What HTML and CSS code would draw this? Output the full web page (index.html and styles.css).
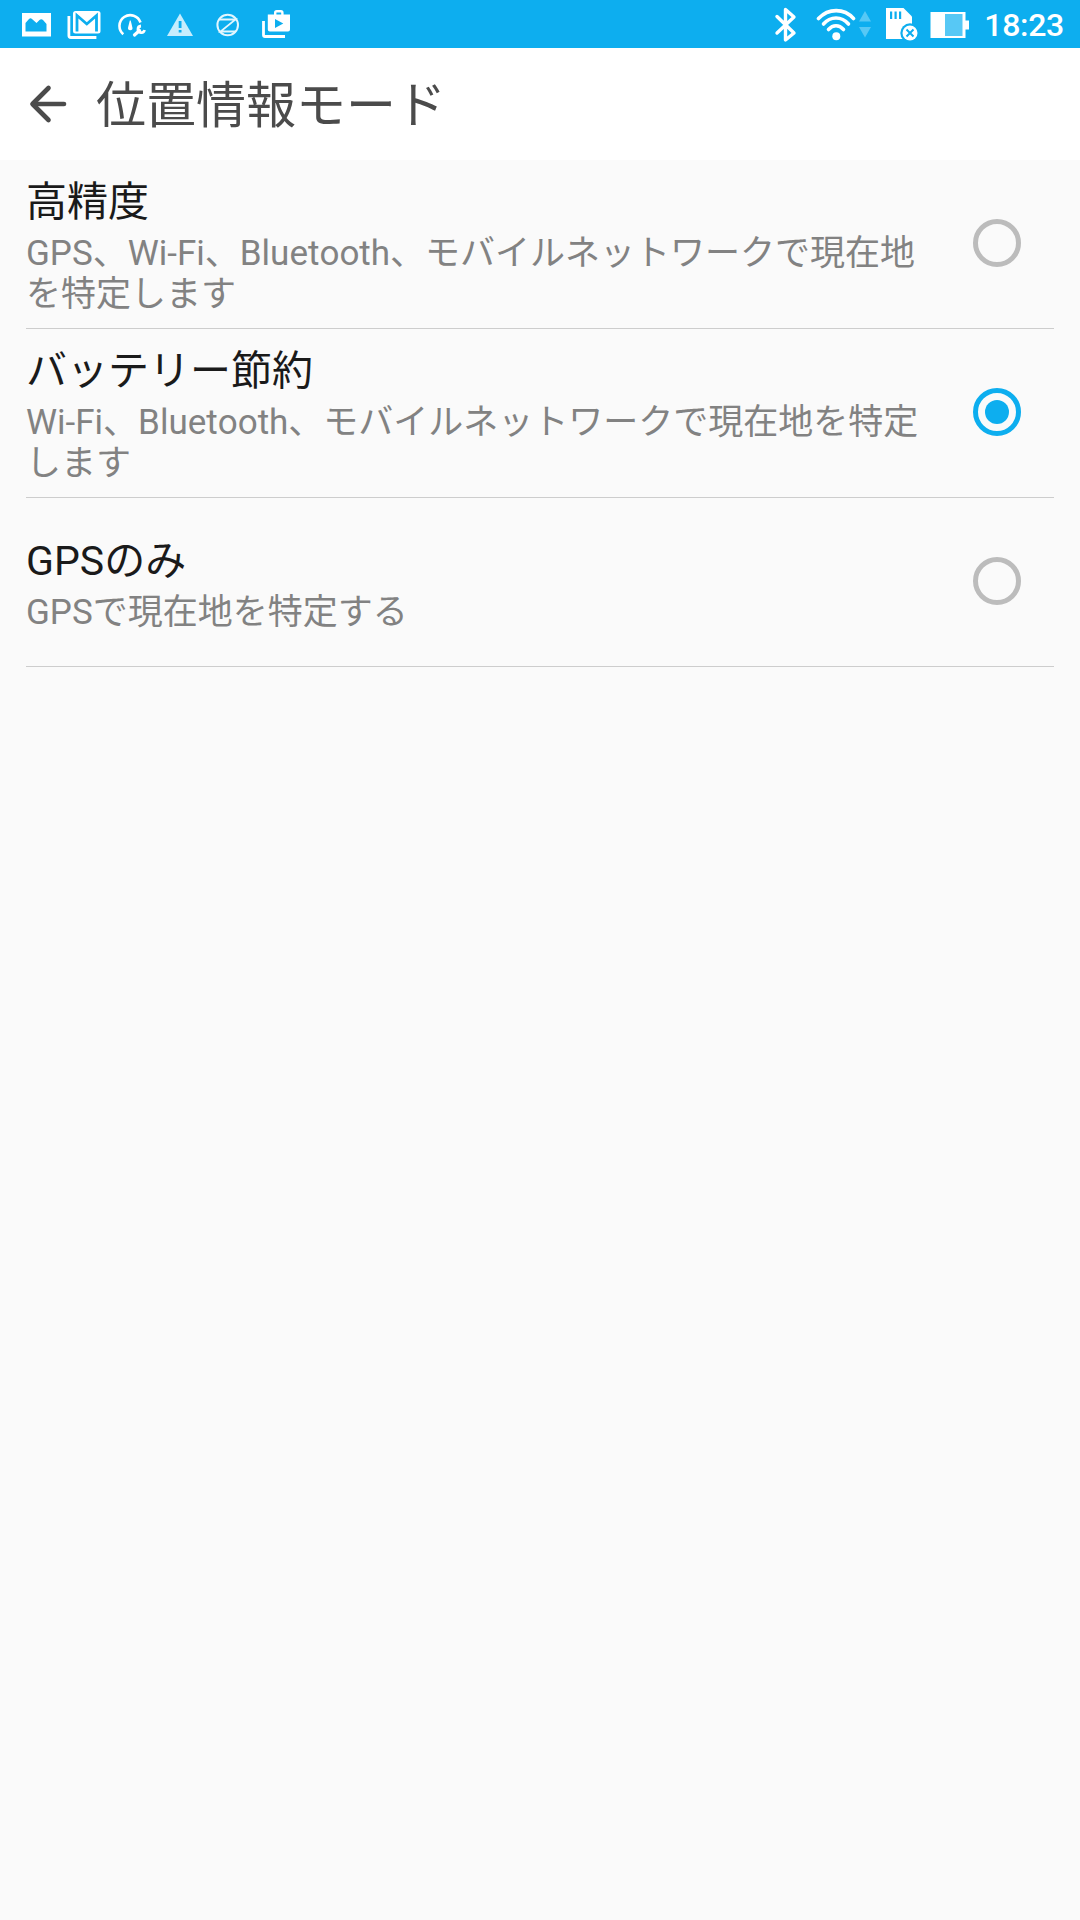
FILE: index.html
```html
<!DOCTYPE html>
<html lang="ja">
<head>
    <meta charset="UTF-8">
    <meta name="viewport" content="width=device-width, initial-scale=1.0">
    <title>位置情報モード</title>
    <link rel="stylesheet" href="styles.css">
</head>
<body>
    <div class="status-bar">
        <div class="notifications">
            <!-- picture -->
            <svg width="30" height="48" viewBox="0 0 30 48">
                <path fill="#fff" fill-rule="evenodd" d="M1 13h29v23.500H1zM4.500 31.500h21v-7.500l-3.500-4c-1-1-2.500-1-3.500 0l-3 3-4.500-4c-1-1-2-1-3 0L4.500 23z"/>
            </svg>
            <!-- mail -->
            <svg width="36" height="48" viewBox="0 0 36 48">
                <path fill="none" stroke="#fff" stroke-width="2.800" d="M2.900 16v19.500a2 2 0 0 0 2 2h25.500"/>
                <rect fill="#fff" x="7" y="11" width="27.500" height="22.500" rx="2.500"/>
                <path fill="none" stroke="#0daeef" stroke-width="2.800" d="M11 31.500V15.500L20.800 24l9.700-8.500v16"/>
            </svg>
            <!-- gauge -->
            <svg width="28" height="48" viewBox="0 0 28 48">
                <path fill="none" stroke="#fff" stroke-width="2.600" d="M5.300 34.200A10.800 10.800 0 1 1 22.500 22.500"/>
                <path fill="#fff" d="M11.800 20.500h.9l1.700 7a2.200 2.200 0 1 1-4.300 0z"/>
                <path fill="none" stroke="#fff" stroke-width="3.200" stroke-linecap="round" d="M16.500 35l5-4.500"/>
                <path fill="none" stroke="#fff" stroke-width="2.800" d="M23 26a3.300 3.300 0 1 0 3.500 4"/>
            </svg>
            <!-- warning -->
            <svg width="26" height="48" viewBox="0 0 26 48">
                <path fill="#c6edfd" d="M13 13.500L26 36H0z"/>
                <path fill="#0daeef" d="M11.700 21h2.800v7h-2.800zM11.700 30h2.800v2.600h-2.800z"/>
            </svg>
            <!-- circled z -->
            <svg width="24" height="48" viewBox="0 0 24 48">
                <circle cx="11.700" cy="25" r="10.300" fill="none" stroke="#e2f6fe" stroke-width="2"/>
                <path fill="none" stroke="#e2f6fe" stroke-width="1.800" d="M4 19.500h15.500L4.500 31.500h15"/>
            </svg>
            <!-- play store -->
            <svg width="30" height="48" viewBox="0 0 30 48">
                <path fill="none" stroke="#fff" stroke-width="2.800" d="M2.500 21v14a1.500 1.500 0 0 0 1.500 1.500h20"/>
                <path fill="none" stroke="#fff" stroke-width="2.400" d="M14.200 16v-3.300a1.500 1.500 0 0 1 1.500-1.500h4.200a1.500 1.500 0 0 1 1.500 1.500V16"/>
                <path fill="#fff" fill-rule="evenodd" d="M6.800 14.500H29V29.500a2 2 0 0 1-2 2H8.800a2 2 0 0 1-2-2zM14 19v9l8.300-4.500z"/>
            </svg>
        </div>
        <div class="system">
            <!-- bluetooth -->
            <svg class="bluetooth" width="24" height="48" viewBox="0 0 24 48">
                <path fill="none" stroke="#fff" stroke-width="3.400" stroke-linejoin="round" stroke-linecap="round" d="M3 16.500L20 33l-8.500 7V9.500L20 17 3 33"/>
            </svg>
            <!-- wifi -->
            <svg class="wifi" width="40" height="48" viewBox="0 0 40 48">
                <g fill="none" stroke="#fff" stroke-width="3.600" stroke-linecap="round">
                    <path d="M2.500 18.500c10-10.500 25.500-10.500 35 0"/>
                    <path d="M7.500 24c7-8 18-8 25 0"/>
                    <path d="M12.500 29.500c4.500-5 10.500-5 15 0"/>
                </g>
                <circle cx="20.300" cy="36.300" r="4" fill="#fff"/>
            </svg>
            <svg class="traffic" width="12" height="48" viewBox="0 0 12 48">
                <path fill="#57c8f5" d="M6 11l6 10.500H0zM6 37.500L0 27h12z"/>
            </svg>
            <!-- sd card -->
            <svg class="sd-card" width="34" height="48" viewBox="0 0 34 48">
                <path fill="#fff" d="M1 8h17.500l8.500 8.500V39H1z"/>
                <path fill="#0daeef" d="M5 11.500h2.200V19H5zM9.500 11.500h2.200V19H9.500zM14 11.500h2.200V19H14z"/>
                <circle cx="25" cy="33" r="9.700" fill="#0daeef"/>
                <circle cx="25" cy="33" r="7.500" fill="#fff"/>
                <path stroke="#0daeef" stroke-width="2" d="M21.500 29.500l7 7M28.500 29.500l-7 7"/>
            </svg>
            <!-- battery -->
            <svg class="battery" width="40" height="48" viewBox="0 0 40 48">
                <path fill="#fff" d="M.5 12h35v8.500H39v9h-3.500V38H.5z"/>
                <path fill="#57c8f5" d="M15 14h17.500v22H15z"/>
            </svg>
            <span class="time">18:23</span>
        </div>
    </div>

    <div class="header">
        <svg width="40" height="40" viewBox="0 0 40 40">
            <path fill="none" stroke="#4b4b4b" stroke-width="4.600" stroke-linecap="round" stroke-linejoin="round" d="M20.500 4L4.500 20l16 16"/>
            <path stroke="#4b4b4b" stroke-width="4.600" stroke-linecap="round" d="M5 20h31"/>
        </svg>
        <h1>位置情報モード</h1>
    </div>

    <div class="options">
        <div class="option">
            <div class="option-text">
                <div class="option-title">高精度</div>
                <div class="option-summary">GPS、Wi-Fi、Bluetooth、モバイルネットワークで現在地<br>を特定します</div>
            </div>
            <div class="radio"></div>
        </div>
        <div class="option">
            <div class="option-text">
                <div class="option-title">バッテリー節約</div>
                <div class="option-summary">Wi-Fi、Bluetooth、モバイルネットワークで現在地を特定<br>します</div>
            </div>
            <div class="radio checked"></div>
        </div>
        <div class="option">
            <div class="option-text">
                <div class="option-title">GPSのみ</div>
                <div class="option-summary">GPSで現在地を特定する</div>
            </div>
            <div class="radio"></div>
        </div>
    </div>
</body>
</html>
```
FILE: styles.css
```css
* {
    box-sizing: border-box;
}
body {
    margin: 0;
    min-height: 1920px;
    font-family: Roboto, "Noto Sans CJK JP", sans-serif;
    background-color: #fafafa;
}
svg {
    display: block;
    flex: none;
}
.status-bar {
    display: flex;
    justify-content: space-between;
    height: 48px;
    padding: 0 16px 0 12px;
    background-color: #0daeef;
}
.notifications {
    display: grid;
    grid-template-columns: repeat(6, 48px);
    justify-items: center;
}
.system {
    display: flex;
    align-items: center;
}
.bluetooth {
    margin-right: 18px;
}
.wifi {
    margin-right: 3px;
}
.traffic {
    margin-right: 14px;
}
.sd-card {
    margin-right: 11px;
}
.battery {
    margin-right: 14px;
}
.time {
    font-size: 32px;
    font-weight: 500;
    line-height: 48px;
    letter-spacing: -0.3px;
    padding-top: 2px;
    color: #fff;
}
.header {
    display: flex;
    align-items: center;
    height: 112px;
    padding-left: 28px;
    background-color: #fff;
}
.header h1 {
    margin: 0 0 0 28px;
    padding-top: 4px;
    font-size: 50px;
    font-weight: 400;
    line-height: 108px;
    color: #4b4b4b;
}
.options {
    padding: 0 26px;
}
.option {
    display: flex;
    align-items: center;
    justify-content: space-between;
    height: 169px;
    padding-right: 33px;
    border-bottom: 1px solid #cdcdcd;
}
.option-text {
    padding-bottom: 1px;
    white-space: nowrap;
}
.option-title {
    font-size: 41px;
    line-height: 61px;
    color: #1a1a1a;
}
.option-summary {
    font-size: 35px;
    line-height: 41px;
    font-kerning: none;
    color: #828282;
}
.radio {
    display: flex;
    align-items: center;
    justify-content: center;
    flex: none;
    width: 48px;
    height: 48px;
    margin-bottom: 2px;
    border: 5px solid #bcbcbc;
    border-radius: 50%;
}
.radio.checked {
    border-color: #0daeef;
}
.radio.checked::after {
    content: "";
    width: 24px;
    height: 24px;
    border-radius: 50%;
    background-color: #0daeef;
}
```
